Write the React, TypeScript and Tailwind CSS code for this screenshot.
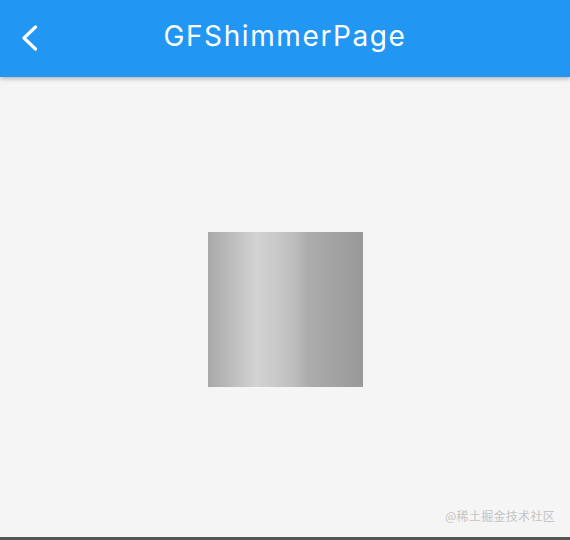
export default function App() {
  return (
    <div className="w-[570px] h-[540px] flex flex-col bg-[#f5f5f5] font-['Roboto',sans-serif] overflow-hidden">
      {/* app bar */}
      <header className="h-[77px] shrink-0 bg-[#2196f3] flex items-center relative shadow-[0_2px_4px_rgba(0,0,0,0.25)] z-10">
        <div className="w-[58px] flex justify-center pb-[1px]">
          <svg width="20" height="26" viewBox="0 0 20 26" fill="none" className="ml-[2px]">
            <polyline points="15.5,2 4,13 15.5,24" stroke="white" strokeWidth="3.2" strokeLinecap="round" strokeLinejoin="round" />
          </svg>
        </div>
        <h1 className="flex-1 text-center text-white text-[28px] tracking-[1.6px] font-['Inter',sans-serif] pr-[58px] pb-[5px]">GFShimmerPage</h1>
      </header>

      <main className="flex-1 flex flex-col items-center">
        <div className="mt-[155px] w-[155px] h-[155px] bg-[linear-gradient(90deg,#a8a8a8_0%,#b8b8b8_12%,#d3d3d3_31%,#c8c8c8_45%,#bcbcbc_56%,#adadad_64%,#a2a2a2_82%,#999999_100%)]" />
        <div className="flex-1" />
        <div className="self-end pr-[15px] pb-[12px] text-[12px] tracking-[0.3px] text-[#c4c4c4] font-['Noto_Sans_CJK_SC',sans-serif]">
          @稀土掘金技术社区
        </div>
        <div className="w-full h-[3px] bg-[#555]" />
      </main>
    </div>
  );
}
